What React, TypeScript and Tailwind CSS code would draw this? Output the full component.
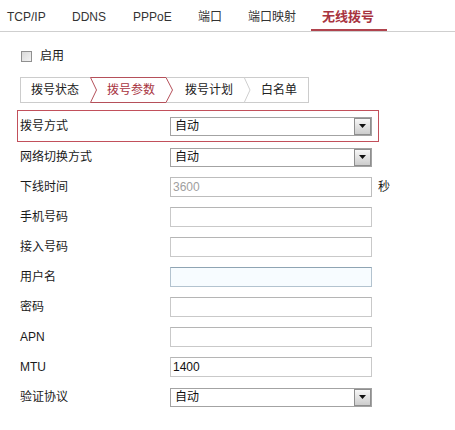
import React from 'react';

const font = "font-['Liberation_Sans','Noto_Sans_CJK_SC',sans-serif]";

// tab label + fixed slot width so text starts line up with the screenshot
const tabs = [
    { label: 'TCP/IP', w: 'w-[65px]' },
    { label: 'DDNS', w: 'w-[61px]' },
    { label: 'PPPoE', w: 'w-[65px]' },
    { label: '端口', w: 'w-[50px]' },
    { label: '端口映射', w: 'w-[74px]' },
];

const SelectBox = ({ value }: { value: string }) => (
    <div className="relative flex h-[19px] w-[202px] items-center border border-[#a3a3a3] bg-white pl-[4px] text-[12px] text-[#111]">
        {value}
        <span className="absolute right-0 top-0 flex h-[17px] w-[17px] items-center justify-center border border-[#8e8e8e] bg-linear-to-b from-[#f7f7f7] to-[#cdcdcd]">
            <svg width="7" height="4" viewBox="0 0 7 4">
                <path d="M0 0h7L3.5 4z" fill="#111" />
            </svg>
        </span>
    </div>
);

const TextBox = ({ value, disabled, focus }: { value?: string, disabled?: boolean, focus?: boolean }) => (
    <div
        className={
            focus
                ? "flex h-[20px] w-[202px] items-center border border-[#b3c3cf] border-t-[#8fa4b3] bg-[#f7fcff] pl-[2px] text-[12px]"
                : disabled
                    ? "flex h-[20px] w-[202px] items-center border border-[#bdbdbd] bg-white pl-[2px] text-[12px] text-[#a0a0a0]"
                    : "flex h-[20px] w-[202px] items-center border border-[#c9c9c9] border-t-[#b5b5b5] bg-white pl-[2px] text-[12px] text-[#111]"
        }
    >
        {value}
    </div>
);

const Row = ({ label, children }: { label: string, children: React.ReactNode }) => (
    <div className="flex h-[30px] items-center pl-[20px]">
        <span className="w-[150px] text-[12px] text-[#1a1a1a]">{label}</span>
        {children}
    </div>
);

export default function App() {
    return (
        <div className={`${font} h-[430px] w-[455px] overflow-hidden bg-white`}>
            {/* Top tabs */}
            <div className="flex h-[32px] border-b border-[#cfcfcf] pl-[7px]">
                {tabs.map((t) => (
                    <div key={t.label} className={`flex ${t.w} items-center pt-[3px] text-[12px] text-[#333]`}>
                        {t.label}
                    </div>
                ))}
                <div className="relative flex items-center pt-[3px] text-[13px] font-bold text-[#a8343f]">
                    无线拨号
                    <span className="absolute bottom-0 left-[-11px] h-[2px] w-[76px] bg-[#b0434d]" />
                </div>
            </div>

            {/* Enable */}
            <div className="mt-[14px] flex h-[20px] items-center pl-[21px]">
                <span className="h-[11px] w-[11px] border border-[#909090] bg-linear-to-br from-[#d9d9d9] to-[#f3f3f3]" />
                <span className="ml-[8px] text-[12px] text-[#1a1a1a]">启用</span>
            </div>

            {/* Breadcrumb steps */}
            <div className="ml-[20px] mt-[11px] flex h-[26px] w-[289px] border border-[#cccccc] text-[12px]">
                <div className="flex w-[69px] items-center pl-[10px] text-[#222]">拨号状态</div>
                <div className="relative flex w-[82px] items-center pl-[17px] text-[#a8343f]">
                    <svg className="absolute -top-px left-0" width="84" height="26" viewBox="0 0 84 26">
                        <path d="M0.5 0.5H76L82.5 13L76 25.5H0.5L6.5 13Z" fill="white" stroke="#b5505a" />
                    </svg>
                    <span className="relative">拨号参数</span>
                </div>
                <div className="relative flex w-[73px] items-center pl-[13px] text-[#222]">
                    拨号计划
                    <svg className="absolute -top-px right-[-6px]" width="8" height="26" viewBox="0 0 8 26">
                        <path d="M1 0L7 13L1 26" fill="none" stroke="#cfcfcf" />
                    </svg>
                </div>
                <div className="flex flex-1 items-center pl-[16px] text-[#222]">白名单</div>
            </div>

            {/* Highlighted first row */}
            <div className="ml-[17px] mt-[7px] w-[362px] border border-[#c2505b]">
                <div className="flex h-[30px] items-center pl-[2px]">
                    <span className="w-[150px] text-[12px] text-[#1a1a1a]">拨号方式</span>
                    <SelectBox value="自动" />
                </div>
            </div>

            <Row label="网络切换方式"><SelectBox value="自动" /></Row>
            <Row label="下线时间">
                <TextBox value="3600" disabled />
                <span className="ml-[6px] text-[12px] text-[#1a1a1a]">秒</span>
            </Row>
            <Row label="手机号码"><TextBox /></Row>
            <Row label="接入号码"><TextBox /></Row>
            <Row label="用户名"><TextBox focus /></Row>
            <Row label="密码"><TextBox /></Row>
            <Row label="APN"><TextBox /></Row>
            <Row label="MTU"><TextBox value="1400" /></Row>
            <Row label="验证协议"><SelectBox value="自动" /></Row>
        </div>
    );
}
